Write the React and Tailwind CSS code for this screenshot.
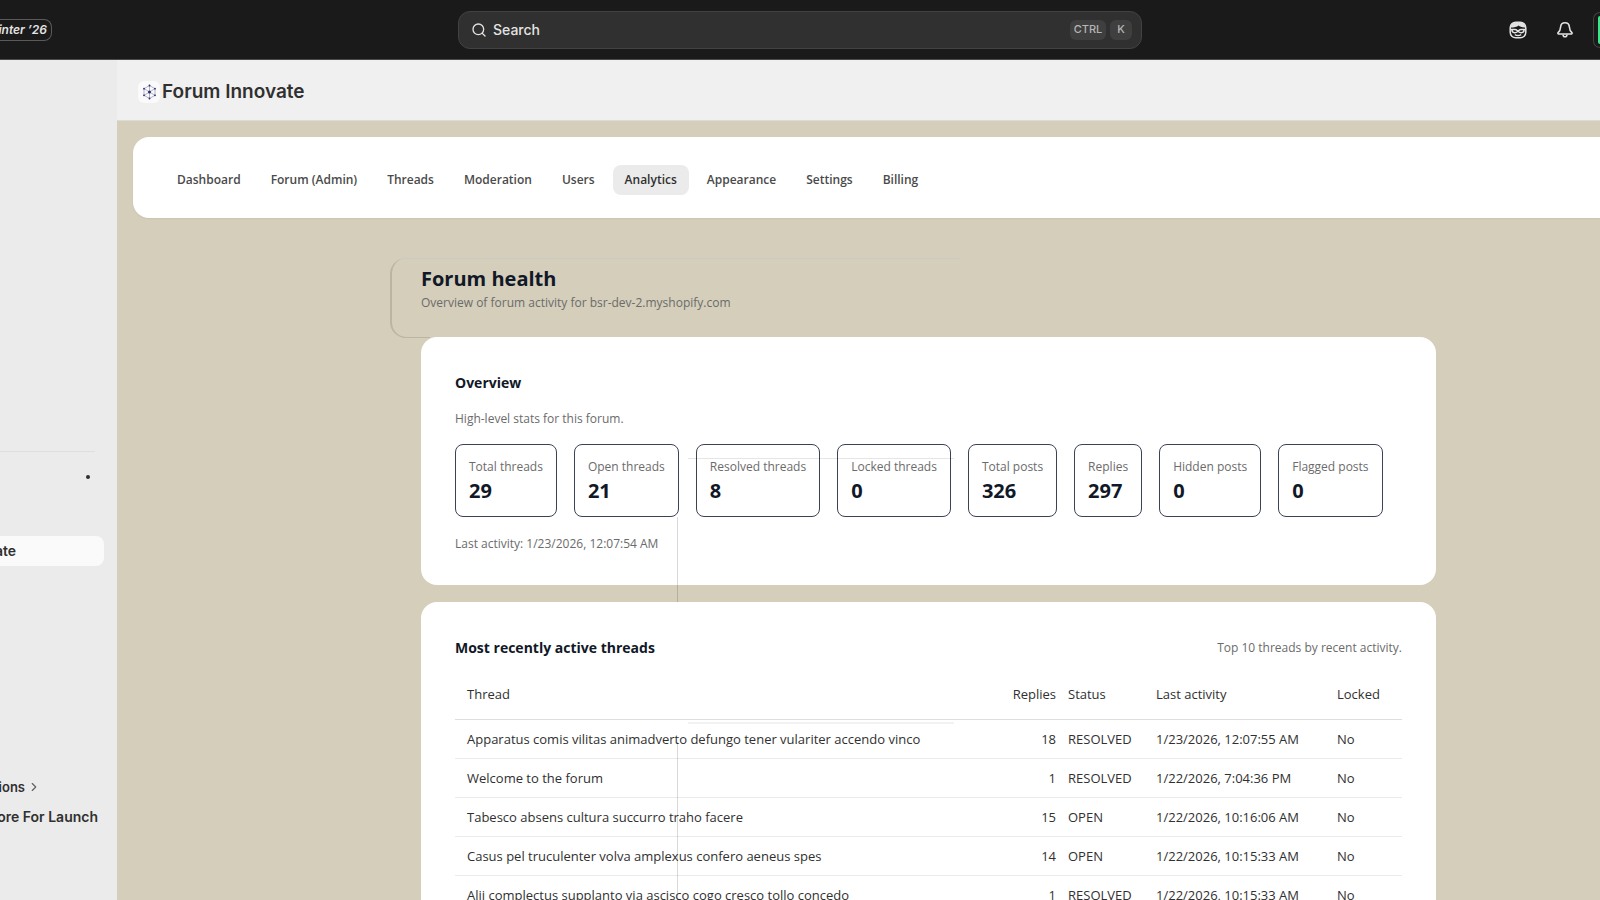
import React from "react";
import { Search, ChevronRight } from "lucide-react";

const navItems = [
  "Dashboard",
  "Forum (Admin)",
  "Threads",
  "Moderation",
  "Users",
  "Analytics",
  "Appearance",
  "Settings",
  "Billing",
];

const stats = [
  { label: "Total threads", value: 29 },
  { label: "Open threads", value: 21 },
  { label: "Resolved threads", value: 8 },
  { label: "Locked threads", value: 0 },
  { label: "Total posts", value: 326 },
  { label: "Replies", value: 297 },
  { label: "Hidden posts", value: 0 },
  { label: "Flagged posts", value: 0 },
];

const threads = [
  {
    title: "Apparatus comis vilitas animadverto defungo tener vulariter accendo vinco",
    replies: 18,
    status: "RESOLVED",
    last: "1/23/2026, 12:07:55 AM",
  },
  { title: "Welcome to the forum", replies: 1, status: "RESOLVED", last: "1/22/2026, 7:04:36 PM" },
  { title: "Tabesco absens cultura succurro traho facere", replies: 15, status: "OPEN", last: "1/22/2026, 10:16:06 AM" },
  { title: "Casus pel truculenter volva amplexus confero aeneus spes", replies: 14, status: "OPEN", last: "1/22/2026, 10:15:33 AM" },
  { title: "Alii complectus supplanto via ascisco cogo cresco tollo concedo", replies: 1, status: "RESOLVED", last: "1/22/2026, 10:15:33 AM" },
];

const SidekickIcon = () => (
  <svg width="18" height="18" viewBox="0 0 18 18" fill="none" stroke="#e3e3e3" strokeWidth="1.5">
    <rect x="1.2" y="1.2" width="15.6" height="15.6" rx="5.5" />
    <path d="M1.5 6.5C2 2.5 5 1 9 1s7 1.500 7.500 5.500C13 6.800 11 5.500 9.500 4.500 8 6 5 6.500 1.500 6.500Z" fill="#e3e3e3" stroke="none" />
    <path d="M1.500 8.500h4.500c2 0 2 1.500 3 1.500s1-1.500 3-1.500h4.500M3 9c0 3.500 4.800 3.300 6 1 1.200 2.300 6 2.500 6-1M5.800 13.600c2 1.200 4.400 1.200 6.400 0" />
  </svg>
);

const BellIcon = () => (
  <svg width="18" height="18" viewBox="0 0 18 18" fill="none" stroke="#e3e3e3" strokeWidth="1.6" strokeLinejoin="round">
    <path d="M9 1.800c-2.500 0-4.200 1.800-4.400 4.200-.2 3-.6 4-2.300 5.400-.7.600-.4 1.600.5 1.600h12.400c.9 0 1.200-1 .5-1.600-1.700-1.400-2.100-2.400-2.300-5.400C13.200 3.600 11.500 1.800 9 1.800Z" />
    <path d="M7 13.500c0 1.300.8 2.300 2 2.300s2-1 2-2.300" />
  </svg>
);

const ForumLogo = () => (
  <svg width="15" height="16" viewBox="0 0 15 16" fill="none" stroke="#8f92b5" strokeWidth="0.7">
    <path d="M7.500 1.500 13 4.700v6.600l-5.500 3.200L2 11.300V4.700ZM7.500 1.500v13M2 4.700l11 6.600M13 4.700 2 11.300" />
    <g fill="#2b2d6b" stroke="none">
      <circle cx="7.500" cy="8" r="1.500" />
      <circle cx="7.500" cy="1.500" r="0.900" />
      <circle cx="13" cy="4.700" r="0.900" />
      <circle cx="13" cy="11.300" r="0.900" />
      <circle cx="7.500" cy="14.500" r="0.900" />
      <circle cx="2" cy="11.300" r="0.900" />
      <circle cx="2" cy="4.700" r="0.900" />
    </g>
  </svg>
);

const TopBar = () => (
  <header className="flex h-[60px] items-center justify-between overflow-hidden border-b border-[#4a4a4a] bg-[#1a1a1a] font-['Inter',sans-serif] text-[#e3e3e3]">
    <div className="flex flex-1">
      <span className="flex h-[22px] w-[52px] items-center justify-end rounded-r-lg border border-l-0 border-[#5a5a5a] pr-1 text-xs font-semibold whitespace-nowrap italic">
        Winter ’26
      </span>
    </div>
    <button className="flex h-[38px] w-[684px] items-center rounded-xl border border-[#424242] bg-[#303030] pr-[9px] pl-3 text-left">
      <Search size={16} strokeWidth={2} />
      <span className="ml-1.5 flex-1 text-sm font-medium">Search</span>
      <kbd className="flex h-5 w-9 items-center justify-center rounded-md bg-[#3f3f3f] font-['Inter',sans-serif] text-[11px] font-medium text-[#b5b5b5]">CTRL</kbd>
      <kbd className="ml-1 flex h-5 w-[22px] items-center justify-center rounded-md bg-[#3f3f3f] font-['Inter',sans-serif] text-[11px] font-medium text-[#b5b5b5]">K</kbd>
    </button>
    <div className="flex flex-1 items-center justify-end">
      <button aria-label="Sidekick">
        <SidekickIcon />
      </button>
      <button aria-label="Notifications" className="ml-[29px]">
        <BellIcon />
      </button>
      <button aria-label="Account" className="ml-[19px] flex h-9 w-[7px] items-center justify-end overflow-hidden rounded-l-xl border border-r-0 border-[#424242]">
        <span className="h-7 w-0.5 rounded-l bg-[#3de58a]" />
      </button>
    </div>
  </header>
);

const Sidebar = () => (
  <aside className="w-[117px] shrink-0 overflow-hidden bg-[#ebebeb] font-['Inter',sans-serif] text-sm font-semibold text-[#303030]">
    <div className="mt-[391px] mr-[22px] border-t border-[#dedede]" />
    <div className="mt-[23px] mr-[27px] flex justify-end">
      <span className="size-1 rounded-full bg-[#303030]" />
    </div>
    <a href="#forum" className="mt-[57px] mr-[13px] flex h-[30px] items-center justify-end rounded-r-lg bg-[#fafafa] pr-[88px] whitespace-nowrap">
      Forum Innovate
    </a>
    <a href="#actions" className="mt-[206px] mr-[76px] flex h-[30px] items-center justify-end text-[13px]">
      ions
      <ChevronRight size={14} className="ml-0.5 shrink-0 text-[#616161]" />
    </a>
    <a href="#launch" className="mr-[19px] flex h-[30px] items-center justify-end whitespace-nowrap">
      ore For Launch
    </a>
  </aside>
);

const App = () => {
  return (
    <div className="flex h-screen flex-col overflow-hidden bg-[#d4ceba]">
      <TopBar />
      <div className="flex min-h-0 flex-1">
        <Sidebar />
        <main className="min-w-0 flex-1 overflow-hidden font-['Open_Sans',sans-serif] text-[#303030]">
          <div className="flex h-[61px] items-center border-b border-[#dcdcd6] bg-[#f0f0f0] pt-1 pl-[21px] font-['Inter',sans-serif]">
            <span className="flex size-[22px] items-center justify-center rounded-md bg-[#fafafa]">
              <ForumLogo />
            </span>
            <h1 className="ml-0.5 text-[19px] font-semibold">Forum Innovate</h1>
          </div>

          <nav className="mt-4 ml-4 flex h-[81px] items-center gap-1.5 rounded-l-2xl bg-white pt-1 pl-8 text-xs font-semibold text-[#4a4a4a] shadow-xs">
            {navItems.map((item) => (
              <a
                key={item}
                href="#nav"
                className={`flex h-[30px] items-center rounded-lg px-3 ${
                  item === "Analytics" ? "bg-[#ebebeb] text-[#303030]" : ""
                }`}
              >
                {item}
              </a>
            ))}
          </nav>

          <div className="relative mr-[164px] ml-[304px] pt-[47px]">
            {/* Frame outline behind the page title */}
            <div className="absolute top-10 -left-[31px] h-20 w-10 rounded-l-2xl border-b border-l-2 border-[#bab6a2]" />
            <div className="absolute top-10 -left-5 w-[560px] border-t border-[#c9cbc6]" />

            <h2 className="text-xl leading-7 font-bold text-[#111827]">Forum health</h2>
            <p className="text-xs leading-5 text-[#6b6b6b]">
              Overview of forum activity for bsr-dev-2.myshopify.com
            </p>

            <section className="relative mt-6 h-[248px] rounded-2xl bg-white px-[34px] pt-9">
              <h3 className="text-sm leading-5 font-bold text-[#111827]">Overview</h3>
              <p className="mt-4 text-xs leading-5 text-[#6b6b6b]">High-level stats for this forum.</p>
              <div className="mt-[15px] flex gap-[17px]">
                {stats.map((stat) => (
                  <div key={stat.label} className="h-[73px] rounded-lg border border-[#3b4252] px-[13px] pt-3 whitespace-nowrap">
                    <div className="text-xs leading-5 text-[#6b6b6b]">{stat.label}</div>
                    <div className="text-xl leading-7 font-bold text-[#111827]">{stat.value}</div>
                  </div>
                ))}
              </div>
              <p className="mt-[17px] text-xs leading-5 text-[#6b6b6b]">Last activity: 1/23/2026, 12:07:54 AM</p>
            </section>

            <section className="mt-[17px] rounded-2xl bg-white px-[34px] pt-9">
              <div className="flex items-center justify-between">
                <h3 className="text-sm leading-5 font-bold text-[#111827]">Most recently active threads</h3>
                <p className="text-xs leading-5 text-[#6b6b6b]">Top 10 threads by recent activity.</p>
              </div>
              <table className="mt-3 w-full table-fixed border-collapse text-[13px] leading-5">
                <thead>
                  <tr className="h-[49px] border-b border-[#dedede] text-left">
                    <th className="pl-3 font-normal">Thread</th>
                    <th className="w-[100px] px-1.5 text-right font-normal">Replies</th>
                    <th className="w-[88px] px-1.5 font-normal">Status</th>
                    <th className="w-[181px] px-1.5 font-normal">Last activity</th>
                    <th className="w-[71px] px-1.5 font-normal">Locked</th>
                  </tr>
                </thead>
                <tbody>
                  {threads.map((thread) => (
                    <tr key={thread.title} className="h-[39px] border-b border-[#ebebeb]">
                      <td className="pl-3 whitespace-nowrap">{thread.title}</td>
                      <td className="px-1.5 text-right">{thread.replies}</td>
                      <td className="px-1.5">{thread.status}</td>
                      <td className="px-1.5 whitespace-nowrap">{thread.last}</td>
                      <td className="px-1.5">No</td>
                    </tr>
                  ))}
                </tbody>
              </table>
            </section>

            {/* Thin guide lines over the cards */}
            <div className="absolute top-[240px] left-[267px] w-[266px] border-t border-black/10" />
            <div className="absolute top-[299px] left-64 h-[85px] border-l border-black/15" />
            <div className="absolute top-[504px] left-[267px] w-[266px] border-t-2 border-black/5" />
            <div className="absolute top-[524px] left-64 h-[160px] border-l border-black/15" />
          </div>
        </main>
      </div>
    </div>
  );
};

export default App;
